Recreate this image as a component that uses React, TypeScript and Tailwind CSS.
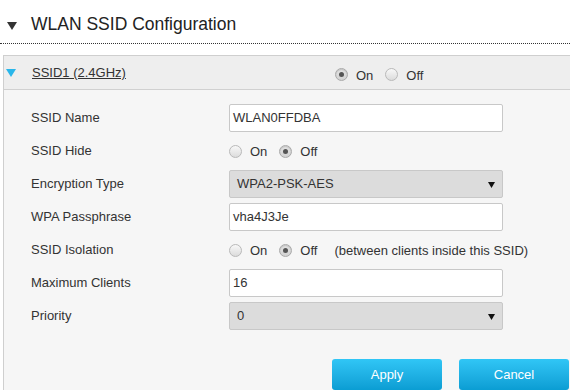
import { useState } from "react";

function Radio({ checked, onClick }: { checked: boolean; onClick?: () => void }) {
  return (
    <span
      onClick={onClick}
      className={
        checked
          ? "flex w-[13px] h-[13px] shrink-0 items-center justify-center rounded-full border border-[#a9a9a9] bg-gradient-to-b from-[#e4e4e4] to-[#d2d2d2] shadow-[inset_0_1px_1px_rgba(0,0,0,0.15)]"
          : "flex w-[13px] h-[13px] shrink-0 items-center justify-center rounded-full border border-[#b9b9b9] bg-gradient-to-b from-[#f8f8f8] to-[#dcdcdc]"
      }
    >
      {checked && <span className="w-[5px] h-[5px] rounded-full bg-[#555]" />}
    </span>
  );
}

function OnOff({ value, onChange }: { value: boolean; onChange: (v: boolean) => void }) {
  return (
    <div className="flex items-center text-[13px] text-[#333]">
      <Radio checked={value} onClick={() => onChange(true)} />
      <span className="ml-[8px] mt-[2px]">On</span>
      <span className="ml-[12px]">
        <Radio checked={!value} onClick={() => onChange(false)} />
      </span>
      <span className="ml-[8px] mt-[2px]">Off</span>
    </div>
  );
}

function Caret() {
  return (
    <svg width="7" height="7" viewBox="0 0 7 7" className="shrink-0">
      <polygon points="0,1 7,1 3.5,7" fill="#111" />
    </svg>
  );
}

function Row({ label, children }: { label: string; children: React.ReactNode }) {
  return (
    <div className="flex items-center h-[28px]">
      <div className="w-[198px] shrink-0 text-[13px] text-[#333]">{label}</div>
      {children}
    </div>
  );
}

function TextBox({ value }: { value: string }) {
  return (
    <div className="w-[274px] h-[28px] flex items-center px-[3px] bg-white border border-[#c8c8c8] rounded-[2px] text-[13px] text-[#333]">
      {value}
    </div>
  );
}

function SelectBox({ value }: { value: string }) {
  return (
    <div className="w-[274px] h-[28px] flex items-center justify-between pl-[7px] pr-[7px] bg-[#dcdcdc] border border-[#c8c8c8] rounded-[2px] text-[13px] text-[#333]">
      <span>{value}</span>
      <Caret />
    </div>
  );
}

export default function App() {
  const [enabled, setEnabled] = useState(true);
  const [hide, setHide] = useState(false);
  const [isolation, setIsolation] = useState(false);

  return (
    <div className="w-[570px] h-[390px] overflow-hidden bg-white font-['Liberation_Sans',Arial,sans-serif]">
      <div className="flex items-center h-[44px] pt-[6px] pl-[7px] border-b border-dotted border-[#333]">
        <svg width="10" height="8" viewBox="0 0 10 8" className="mt-[2px]">
          <polygon points="0,0 10,0 5,8" fill="#333" />
        </svg>
        <span className="ml-[14px] text-[17.5px] text-[#222]">WLAN SSID Configuration</span>
      </div>

      <div className="mt-[11px] ml-[3px] border-l border-t border-[#cfcfcf]">
        <div className="flex items-center h-[34px] bg-[#eeeeee] border-b border-[#d0d0d0]">
          <svg width="10" height="8" viewBox="0 0 10 8" className="ml-[2px] mt-[1px]">
            <polygon points="0,0 10,0 5,8" fill="#29b6ea" />
          </svg>
          <span className="ml-[16px] w-[303px] text-[13px] text-[#333] underline">SSID1 (2.4GHz)</span>
          <div className="mt-[4px]">
            <OnOff value={enabled} onChange={setEnabled} />
          </div>
        </div>

        <div className="bg-[#f6f6f6] pt-[14px] pl-[27px] h-[310px]">
          <div className="flex flex-col gap-[5px]">
            <Row label="SSID Name">
              <TextBox value="WLAN0FFDBA" />
            </Row>
            <Row label="SSID Hide">
              <OnOff value={hide} onChange={setHide} />
            </Row>
            <Row label="Encryption Type">
              <SelectBox value="WPA2-PSK-AES" />
            </Row>
            <Row label="WPA Passphrase">
              <TextBox value="vha4J3Je" />
            </Row>
            <Row label="SSID Isolation">
              <OnOff value={isolation} onChange={setIsolation} />
              <span className="ml-[17px] mt-[2px] text-[13px] text-[#333]">(between clients inside this SSID)</span>
            </Row>
            <Row label="Maximum Clients">
              <TextBox value="16" />
            </Row>
            <Row label="Priority">
              <SelectBox value="0" />
            </Row>
          </div>

          <div className="flex gap-[17px] mt-[29px] ml-[301px]">
            <button className="w-[110px] h-[31px] shrink-0 rounded-[3px] bg-gradient-to-b from-[#30c6f6] to-[#0a9dd3] text-white text-[13px]">
              Apply
            </button>
            <button className="w-[110px] h-[31px] shrink-0 rounded-[3px] bg-gradient-to-b from-[#30c6f6] to-[#0a9dd3] text-white text-[13px]">
              Cancel
            </button>
          </div>
        </div>
      </div>
    </div>
  );
}
